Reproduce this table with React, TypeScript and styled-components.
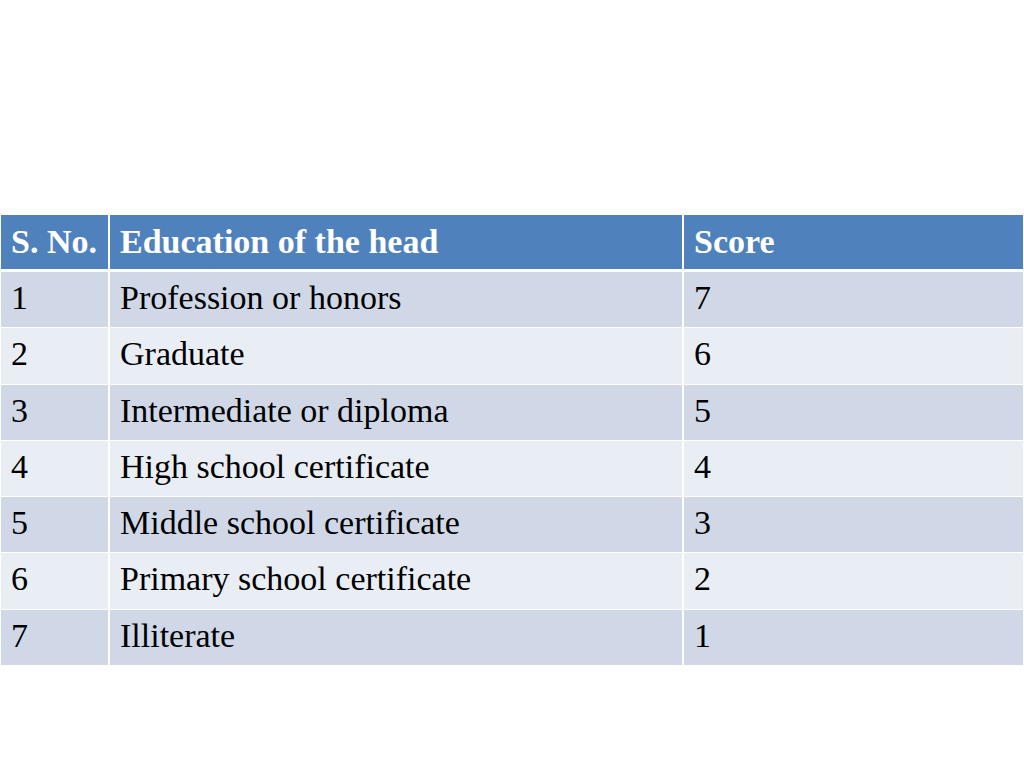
import React from "react";
import styled, { createGlobalStyle } from "styled-components";

const Global = createGlobalStyle`
  html, body { margin: 0; padding: 0; background: #ffffff; }
  body { width: 1024px; height: 768px; overflow: hidden; }
`;

const Page = styled.div`
  width: 1024px;
  height: 768px;
  background: #ffffff;
  padding-top: 215px;
  padding-left: 1px;
  box-sizing: border-box;
  font-family: "Liberation Serif", "Times New Roman", serif;
`;

const Table = styled.div`
  width: 1022px;
  display: flex;
  flex-direction: column;
  gap: 1px;
  background: #ffffff;
`;

const Row = styled.div<{ $kind: "head" | "odd" | "even" }>`
  display: grid;
  grid-template-columns: 107px 572px 1fr;
  column-gap: 2px;
  height: ${(p) => (p.$kind === "head" ? "54px" : "55.25px")};
  margin-bottom: ${(p) => (p.$kind === "head" ? "2px" : "0")};
  & > div {
    background: ${(p) =>
      p.$kind === "head" ? "#4f81bd" : p.$kind === "odd" ? "#d0d8e8" : "#e9edf4"};
    color: ${(p) => (p.$kind === "head" ? "#ffffff" : "#000000")};
    font-weight: ${(p) => (p.$kind === "head" ? 700 : 400)};
    padding-top: ${(p) => (p.$kind === "head" ? "10px" : "9px")};
  }
`;

const Cell = styled.div`
  box-sizing: border-box;
  padding-left: 10px;
  font-size: 34px;
  line-height: 1;
  white-space: nowrap;
`;

const rows: [string, string, string][] = [
  ["1", "Profession or honors", "7"],
  ["2", "Graduate", "6"],
  ["3", "Intermediate or diploma", "5"],
  ["4", "High school certificate", "4"],
  ["5", "Middle school certificate", "3"],
  ["6", "Primary school certificate", "2"],
  ["7", "Illiterate", "1"],
];

export default function App() {
  return (
    <>
      <Global />
      <Page>
        <Table>
          <Row $kind="head">
            <Cell>S. No.</Cell>
            <Cell>Education of the head</Cell>
            <Cell>Score</Cell>
          </Row>
          {rows.map((r, i) => (
            <Row key={r[0]} $kind={i % 2 === 0 ? "odd" : "even"}>
              <Cell>{r[0]}</Cell>
              <Cell>{r[1]}</Cell>
              <Cell>{r[2]}</Cell>
            </Row>
          ))}
        </Table>
      </Page>
    </>
  );
}
